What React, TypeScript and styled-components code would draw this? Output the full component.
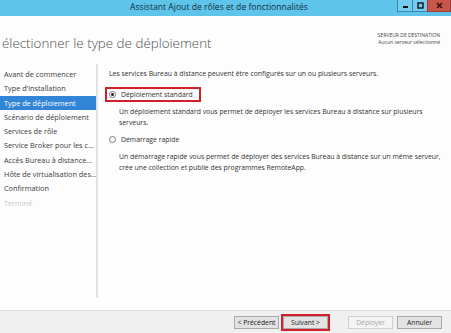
import { createGlobalStyle } from 'styled-components';
import styled from 'styled-components';

const GlobalStyle = createGlobalStyle`
	html, body {
		margin: 0;
		padding: 0;
		background: #ffffff;
		overflow: hidden;
	}
	body {
		font-family: 'Open Sans', 'Noto Sans', sans-serif;
	}
`;

const steps = [
	{ label: 'Avant de commencer' },
	{ label: "Type d'installation" },
	{ label: 'Type de déploiement', active: true },
	{ label: 'Scénario de déploiement' },
	{ label: 'Services de rôle' },
	{ label: 'Service Broker pour les c...' },
	{ label: 'Accès Bureau à distance...' },
	{ label: 'Hôte de virtualisation des...' },
	{ label: 'Confirmation' },
	{ label: 'Terminé', disabled: true },
];

export const App = () => {
	return (
		<>
			<GlobalStyle />
			<Window>
				<TitleBar>
					<Title>Assistant Ajout de rôles et de fonctionnalités</Title>
					<Controls>
						<CtrlButton>
							<svg width="7" height="7" viewBox="0 0 7 7">
								<rect x="1" y="4" width="5" height="2" fill="#111" />
							</svg>
						</CtrlButton>
						<CtrlButton>
							<svg width="7" height="7" viewBox="0 0 7 7">
								<rect x="1" y="1" width="5" height="5" fill="none" stroke="#111" strokeWidth="1.4" />
							</svg>
						</CtrlButton>
						<CloseButton>
							<svg width="7" height="7" viewBox="0 0 7 7">
								<path d="M1 1 L6 6 M6 1 L1 6" stroke="#3a1010" strokeWidth="1.6" />
							</svg>
						</CloseButton>
					</Controls>
				</TitleBar>
				<Header>
					<Heading>électionner le type de déploiement</Heading>
					<Destination>
						<span>SERVEUR DE DESTINATION</span>
						<span>Aucun serveur sélectionné</span>
					</Destination>
				</Header>
				<Body>
					<Nav>
						{steps.map((s) => (
							<NavItem key={s.label} $active={s.active} $disabled={s.disabled}>
								{s.label}
							</NavItem>
						))}
					</Nav>
					<Content>
						<Para>Les services Bureau à distance peuvent être configurés sur un ou plusieurs serveurs.</Para>
						<Option $highlight>
							<Radio $checked />
							Déploiement standard
						</Option>
						<Description>
							Un déploiement standard vous permet de déployer les services Bureau à distance sur plusieurs
							serveurs.
						</Description>
						<Option>
							<Radio />
							Démarrage rapide
						</Option>
						<Description>
							Un démarrage rapide vous permet de déployer des services Bureau à distance sur un même serveur,
							crée une collection et publie des programmes RemoteApp.
						</Description>
					</Content>
				</Body>
				<Footer>
					<Button>&lt; Précédent</Button>
					<Button $highlight>Suivant &gt;</Button>
					<Button $disabled $gap>
						Déployer
					</Button>
					<Button>Annuler</Button>
				</Footer>
			</Window>
		</>
	);
};

export default App;

const Window = styled.div`
	width: 451px;
	height: 333px;
	display: flex;
	flex-direction: column;
	background: #fdfdfd;
`;

const TitleBar = styled.div`
	height: 16px;
	background: #5fc4ea;
	display: flex;
	align-items: flex-start;
`;

const Title = styled.div`
	flex: 1;
	text-align: center;
	padding-left: 40px;
	font-size: 8.6px;
	line-height: 15px;
	color: #10303f;
`;

const Controls = styled.div`
	display: flex;
	height: 12px;
`;

const CtrlButton = styled.div`
	width: 16px;
	height: 12px;
	box-sizing: border-box;
	border: 1px solid #3a86ad;
	border-top: none;
	margin-left: -1px;
	background: #74cdef;
	display: flex;
	align-items: center;
	justify-content: center;
`;

const CloseButton = styled(CtrlButton)`
	width: 24px;
	border-color: #a03c34;
	background: #c9564c;
`;

const Header = styled.div`
	height: 48px;
	display: flex;
	justify-content: space-between;
	align-items: flex-start;
	padding: 0 11px 0 2px;
`;

const Heading = styled.h1`
	margin: 18px 0 0;
	font-size: 13.4px;
	font-weight: 300;
	color: #505050;
`;

const Destination = styled.div`
	margin-top: 16px;
	display: flex;
	flex-direction: column;
	align-items: flex-end;
	font-size: 5px;
	line-height: 7px;
	color: #444;
`;

const Body = styled.div`
	flex: 1;
	display: flex;
	padding-bottom: 12px;
`;

const Nav = styled.div`
	width: 96px;
	border-right: 2px solid #e2e2e2;
	padding-top: 3px;
	display: flex;
	flex-direction: column;
`;

const NavItem = styled.div<{ $active?: boolean; $disabled?: boolean }>`
	height: 14.3px;
	line-height: 14.3px;
	padding-left: 4px;
	font-size: 7.3px;
	white-space: nowrap;
	overflow: hidden;
	color: ${(p) => (p.$disabled ? '#c8c8c8' : p.$active ? '#ffffff' : '#3c3c3c')};
	background: ${(p) => (p.$active ? '#3284d6' : 'transparent')};
`;

const Content = styled.div`
	flex: 1;
	padding: 5px 0 0 11px;
	font-size: 6.85px;
	color: #333;
`;

const Para = styled.p`
	margin: 0 0 8px;
	line-height: 10px;
`;

const Option = styled.div<{ $highlight?: boolean }>`
	display: inline-flex;
	align-items: center;
	gap: 5px;
	margin-left: -4px;
	padding: 1px 6px 1px 2px;
	line-height: 9px;
	border: 2px solid ${(p) => (p.$highlight ? '#d0202a' : 'transparent')};
`;

const Radio = styled.span<{ $checked?: boolean }>`
	width: 7px;
	height: 7px;
	box-sizing: border-box;
	border-radius: 50%;
	border: 1px solid #7a7a7a;
	background: #fff;
	display: inline-flex;
	align-items: center;
	justify-content: center;

	&::after {
		content: '';
		width: 3px;
		height: 3px;
		border-radius: 50%;
		background: ${(p) => (p.$checked ? '#222' : 'transparent')};
	}
`;

const Description = styled.p`
	margin: 4px 0 4px 10px;
	line-height: 11px;
	width: 325px;
`;

const Footer = styled.div`
	height: 23px;
	box-sizing: border-box;
	border-top: 1px solid #dcdcdc;
	background: #f0f0f0;
	display: flex;
	align-items: center;
	justify-content: flex-end;
	padding: 0 9px 0 0;
	gap: 4px;
`;

const Button = styled.div<{ $highlight?: boolean; $disabled?: boolean; $gap?: boolean }>`
	width: 45px;
	height: 13px;
	box-sizing: border-box;
	display: flex;
	align-items: center;
	justify-content: center;
	font-size: 6.8px;
	color: ${(p) => (p.$disabled ? '#a8a8a8' : '#222')};
	background: ${(p) => (p.$disabled ? '#f4f4f4' : '#e3e3e3')};
	border: 1px solid ${(p) => (p.$disabled ? '#d0d0d0' : '#a9a9a9')};
	outline: ${(p) => (p.$highlight ? '2px solid #d0202a' : 'none')};
	margin-left: ${(p) => (p.$gap ? '16px' : '0')};
`;
